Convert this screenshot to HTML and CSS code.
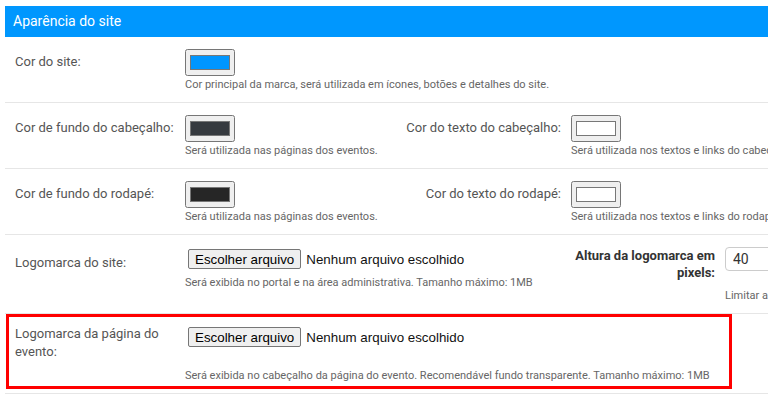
FILE: index.html
```html
<!DOCTYPE html>
<html lang="pt-BR">
<head>
<meta charset="utf-8">
<title>Aparência do site</title>
<link rel="stylesheet" href="styles.css">
</head>
<body>
<div class="panel">
  <div class="panel-heading">Aparência do site</div>

  <div class="row">
    <label class="label">Cor do site:</label>
    <div class="control control-wide">
      <input type="color" class="color" value="#0096ff">
      <p class="help">Cor principal da marca, será utilizada em ícones, botões e detalhes do site.</p>
    </div>
  </div>

  <div class="row">
    <label class="label">Cor de fundo do cabeçalho:</label>
    <div class="control control-half">
      <input type="color" class="color" value="#363a3f">
      <p class="help">Será utilizada nas páginas dos eventos.</p>
    </div>
    <label class="label label-right">Cor do texto do cabeçalho:</label>
    <div class="control">
      <input type="color" class="color" value="#ffffff">
      <p class="help nowrap">Será utilizada nos textos e links do cabeçalho.</p>
    </div>
  </div>

  <div class="row">
    <label class="label">Cor de fundo do rodapé:</label>
    <div class="control control-half">
      <input type="color" class="color" value="#262626">
      <p class="help">Será utilizada nas páginas dos eventos.</p>
    </div>
    <label class="label label-right">Cor do texto do rodapé:</label>
    <div class="control">
      <input type="color" class="color" value="#ffffff">
      <p class="help nowrap">Será utilizada nos textos e links do rodapé.</p>
    </div>
  </div>

  <div class="row">
    <label class="label label-file">Logomarca do site:</label>
    <div class="control control-logo">
      <div class="file">
        <button type="button" class="file-btn">Escolher arquivo</button>
        <span class="file-name">Nenhum arquivo escolhido</span>
      </div>
      <p class="help help-file">Será exibida no portal e na área administrativa. Tamanho máximo: 1MB</p>
    </div>
    <label class="label label-bold">Altura da logomarca em pixels:</label>
    <div class="control">
      <input type="number" class="number" value="40">
      <p class="help help-number nowrap">Limitar a altura da logomarca.</p>
    </div>
  </div>

  <div class="row row-highlight">
    <label class="label label-two">Logomarca da página do evento:</label>
    <div class="control control-wide">
      <div class="file file-two">
        <button type="button" class="file-btn">Escolher arquivo</button>
        <span class="file-name">Nenhum arquivo escolhido</span>
      </div>
      <p class="help help-event">Será exibida no cabeçalho da página do evento. Recomendável fundo transparente. Tamanho máximo: 1MB</p>
    </div>
  </div>
</div>
</body>
</html>
```

FILE: styles.css
```css
html, body {
  margin: 0;
  padding: 0;
  background: #ffffff;
  overflow: hidden;
}

body {
  font-family: Roboto, "Liberation Sans", Arial, sans-serif;
}

.panel {
  margin: 6px 0 0 5px;
  width: 900px;
}

.panel-heading {
  height: 31px;
  line-height: 31px;
  padding-left: 8px;
  background: #0097fe;
  color: #ffffff;
  font-size: 14px;
}

.row {
  position: relative;
  display: flex;
  align-items: flex-start;
  padding: 12px 0 10px 10px;
  border-bottom: 1px solid #e6e6e6;
}

.label {
  flex: none;
  width: 160px;
  margin-right: 10px;
  margin-top: 4px;
  font-size: 13px;
  line-height: 18px;
  color: #555555;
}

.label-right {
  width: 166px;
  text-align: right;
}

.label-file {
  margin-top: 7px;
}

.label-bold {
  width: 150px;
  margin-top: 0;
  text-align: right;
  font-weight: bold;
  line-height: 17px;
  color: #333333;
}

.control {
  flex: none;
}

.control-wide {
  width: 600px;
}

.control-half {
  width: 210px;
}

.control-logo {
  width: 380px;
}

.color {
  display: block;
  margin: 0;
  width: 50px;
  height: 27px;
}

.help {
  margin: 2px 0 0;
  font-size: 11px;
  line-height: 14px;
  color: #666666;
}

.nowrap {
  white-space: nowrap;
}

.file {
  display: flex;
  align-items: center;
  margin: 2px 0 0 3px;
  font-family: "Liberation Sans", Arial, sans-serif;
  font-size: 13.333px;
}

.file-two {
  margin-top: -2px;
}

.file-btn {
  margin: 0 5px 0 0;
  padding: 1px 6px;
  height: 20px;
  background: #efefef;
  border: 1px solid #767676;
  border-radius: 2px;
  font-family: "Liberation Sans", Arial, sans-serif;
  font-size: 13.333px;
  color: #000000;
}

.file-name {
  color: #111111;
}

.help-file {
  margin-top: 7px;
}

.help-event {
  margin-top: 22px;
}

.number {
  display: block;
  box-sizing: border-box;
  margin: 0;
  width: 120px;
  height: 24px;
  padding: 0 7px;
  border: 1px solid #cccccc;
  border-radius: 4px;
  font-family: Roboto, "Liberation Sans", Arial, sans-serif;
  font-size: 14px;
  color: #333333;
}

.help-number {
  margin-top: 18px;
}

.row-highlight {
  padding-top: 15px;
}

.row-highlight .label {
  margin-top: -4px;
}

.row-highlight::after {
  content: "";
  position: absolute;
  left: 1px;
  top: 0;
  width: 720px;
  height: 69px;
  border: 3px solid #ff0000;
  pointer-events: none;
}
```
